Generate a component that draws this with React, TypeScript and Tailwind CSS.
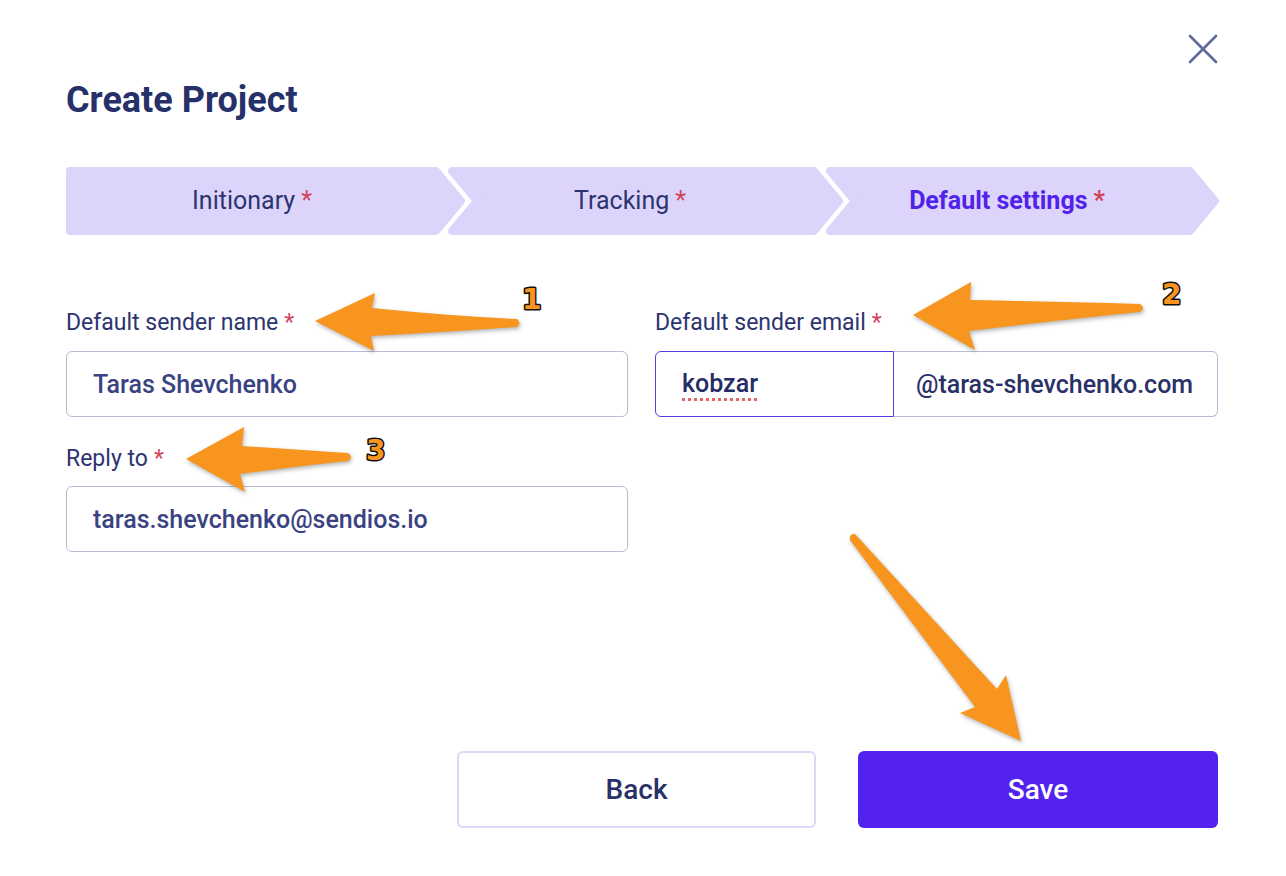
type Step = { label: string; active?: boolean };

const steps: Step[] = [
  { label: "Initionary" },
  { label: "Tracking" },
  { label: "Default settings", active: true },
];

function Req() {
  return <span className="ml-[6px] text-[#d2455f]">*</span>;
}

function Stepper() {
  return (
    <div className="relative h-[68px] w-[1154px]">
      <svg
        className="absolute inset-0"
        width="1154"
        height="68"
        viewBox="0 0 1154 68"
        fill="#ddd4fb"
        stroke="#ddd4fb"
        strokeWidth="8"
        strokeLinejoin="round"
      >
        <path d="M4,4 H370 L395,34 L370,64 H4 Z" />
        <path d="M386,4 H748 L773,34 L748,64 H386 L411,34 Z" />
        <path d="M764,4 H1124 L1149,34 L1124,64 H764 L789,34 Z" />
      </svg>
      <div className="relative grid h-full grid-cols-[372px_372px_370px] gap-x-[6px]">
        {steps.map((s) => (
          <div
            key={s.label}
            className={`flex items-center justify-center text-[25px] ${
              s.active ? "font-bold text-[#5122ea]" : "text-[#2c3470]"
            }`}
          >
            {s.label}
            <Req />
          </div>
        ))}
      </div>
    </div>
  );
}

function Label({ children }: { children: React.ReactNode }) {
  return (
    <label className="block text-[23px] leading-[28px] text-[#2c3470]">
      {children}
      <Req />
    </label>
  );
}

const inputCls =
  "h-[66px] w-full rounded-[6px] border border-[#b9bcd6] bg-white px-[26px] text-[25px] font-medium text-[#3a4382] outline-none";

function Annotations() {
  return (
    <svg
      className="pointer-events-none absolute inset-0"
      width="1286"
      height="876"
      viewBox="0 0 1286 876"
    >
      <g fill="#f7951f" style={{ filter: "drop-shadow(1px 2px 2px rgba(0,0,0,0.3))" }}>
        <path d="M315,321 L375,293 L372,308 Q450,316 517,319 Q522,323 517,327 Q450,332 371,336 L374,351 Z" />
        <path d="M913,315 L971,282 L970,300 Q1060,302 1140,304 Q1146,308 1140,312 Q1060,320 969,331 L975,350 Z" />
        <path d="M186,459 L244,427 L242,446 Q300,450 348,453 Q354,457 348,461 Q300,466 240,474 L245,492 Z" />
        <path d="M855,534 L997,689 L1006,675 L1021,741 L960,713 L975,707 L850,540 Q849,533 855,534 Z" />
      </g>
      <g
        fill="#f7951f"
        stroke="#111"
        strokeWidth="3"
        strokeLinejoin="round"
        paintOrder="stroke"
        fontFamily="'DejaVu Sans', sans-serif"
        fontWeight="bold"
        fontSize="28"
      >
        <text x="522" y="309">1</text>
        <text x="1162" y="304">2</text>
        <text x="366" y="460">3</text>
      </g>
    </svg>
  );
}

export default function App() {
  return (
    <div className="relative h-[876px] w-[1286px] overflow-hidden bg-white font-['Roboto',sans-serif]">
      <div className="flex flex-col pl-[66px] pr-[68px]">
        <div className="flex justify-end pt-[34px]">
          <button type="button" className="h-[30px] w-[30px] text-[#606a9c]" aria-label="Close">
            <svg width="30" height="30" viewBox="0 0 30 30" stroke="currentColor" strokeWidth="2.6" strokeLinecap="round">
              <path d="M2,2 L28,28 M28,2 L2,28" />
            </svg>
          </button>
        </div>
        <h1 className="mt-[14px] text-[36px] font-bold leading-[44px] text-[#263069]">
          Create Project
        </h1>

        <div className="mt-[45px]">
          <Stepper />
        </div>

        <div className="mt-[74px] grid grid-cols-[562px_563px] gap-x-[27px]">
          <div className="flex flex-col">
            <Label>Default sender name</Label>
            <input className={`mt-[14px] ${inputCls}`} readOnly value="Taras Shevchenko" />
            <div className="mt-[28px]">
              <Label>Reply to</Label>
            </div>
            <input
              className={`mt-[13px] ${inputCls}`}
              readOnly
              value="taras.shevchenko@sendios.io"
            />
          </div>
          <div className="flex flex-col">
            <Label>Default sender email</Label>
            <div className="mt-[14px] flex h-[66px]">
              <div className="flex w-[239px] items-center rounded-l-[6px] border border-[#5a3be0] px-[26px] text-[25px] font-medium text-[#262d66]">
                <span className="underline decoration-[#e86464] decoration-dotted decoration-[3px] underline-offset-[6px]">
                  kobzar
                </span>
              </div>
              <input
                className="h-full min-w-0 flex-1 rounded-r-[6px] border border-l-0 border-[#b9bcd6] bg-white px-[22px] text-[25px] font-medium text-[#2a3168] outline-none"
                readOnly
                value="@taras-shevchenko.com"
              />
            </div>
          </div>
        </div>

        <div className="mt-[199px] flex justify-end gap-x-[42px]">
          <button
            type="button"
            className="h-[77px] w-[359px] rounded-[6px] border-2 border-[#dcd8f6] bg-white text-[28px] font-medium text-[#283169]"
          >
            Back
          </button>
          <button
            type="button"
            className="h-[77px] w-[360px] rounded-[6px] bg-[#5322ee] text-[28px] font-medium text-white"
          >
            Save
          </button>
        </div>
      </div>
      <Annotations />
    </div>
  );
}
